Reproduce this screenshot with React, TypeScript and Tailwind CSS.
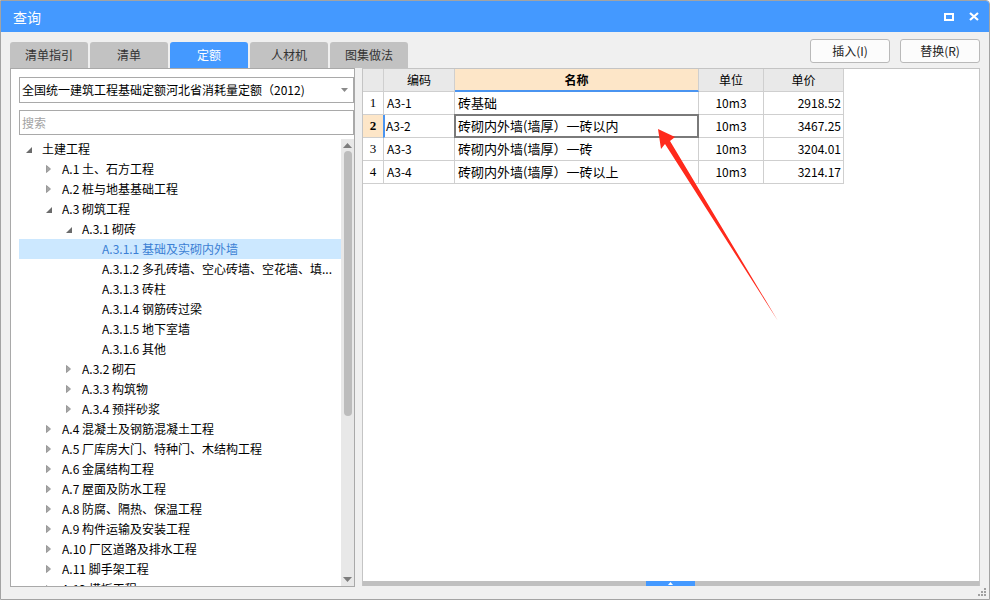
import React from 'react';

type TreeNode = { level: number; icon?: 'open' | 'closed'; text: string; selected?: boolean };

const treeData: TreeNode[] = [
  { level: 0, icon: 'open', text: '土建工程' },
  { level: 1, icon: 'closed', text: 'A.1 土、石方工程' },
  { level: 1, icon: 'closed', text: 'A.2 桩与地基基础工程' },
  { level: 1, icon: 'open', text: 'A.3 砌筑工程' },
  { level: 2, icon: 'open', text: 'A.3.1 砌砖' },
  { level: 3, text: 'A.3.1.1 基础及实砌内外墙', selected: true },
  { level: 3, text: 'A.3.1.2 多孔砖墙、空心砖墙、空花墙、填...' },
  { level: 3, text: 'A.3.1.3 砖柱' },
  { level: 3, text: 'A.3.1.4 钢筋砖过梁' },
  { level: 3, text: 'A.3.1.5 地下室墙' },
  { level: 3, text: 'A.3.1.6 其他' },
  { level: 2, icon: 'closed', text: 'A.3.2 砌石' },
  { level: 2, icon: 'closed', text: 'A.3.3 构筑物' },
  { level: 2, icon: 'closed', text: 'A.3.4 预拌砂浆' },
  { level: 1, icon: 'closed', text: 'A.4 混凝土及钢筋混凝土工程' },
  { level: 1, icon: 'closed', text: 'A.5 厂库房大门、特种门、木结构工程' },
  { level: 1, icon: 'closed', text: 'A.6 金属结构工程' },
  { level: 1, icon: 'closed', text: 'A.7 屋面及防水工程' },
  { level: 1, icon: 'closed', text: 'A.8 防腐、隔热、保温工程' },
  { level: 1, icon: 'closed', text: 'A.9 构件运输及安装工程' },
  { level: 1, icon: 'closed', text: 'A.10 厂区道路及排水工程' },
  { level: 1, icon: 'closed', text: 'A.11 脚手架工程' },
  { level: 1, icon: 'closed', text: 'A.12 模板工程' },
];

const indent = ['pl-[3px]', 'pl-[23px]', 'pl-[43px]', 'pl-[63px]'];

const rows = [
  { no: 1, code: 'A3-1', name: '砖基础', unit: '10m3', price: '2918.52' },
  { no: 2, code: 'A3-2', name: '砖砌内外墙(墙厚）一砖以内', unit: '10m3', price: '3467.25' },
  { no: 3, code: 'A3-3', name: '砖砌内外墙(墙厚）一砖', unit: '10m3', price: '3204.01' },
  { no: 4, code: 'A3-4', name: '砖砌内外墙(墙厚）一砖以上', unit: '10m3', price: '3214.17' },
];

const tabs = ['清单指引', '清单', '定额', '人材机', '图集做法'];

const TreeIcon = ({ icon }: { icon?: 'open' | 'closed' }) => {
  if (icon === 'open')
    return (
      <svg width="6" height="6" className="mt-[2px]">
        <path d="M6 0 L6 6 L0 6 Z" fill="#6b6b6b" />
      </svg>
    );
  if (icon === 'closed')
    return (
      <svg width="5" height="8">
        <path d="M0.5 0.5 L4.5 4 L0.5 7.5 Z" fill="#a6a6a6" stroke="#8c8c8c" strokeWidth="0.8" />
      </svg>
    );
  return null;
};

export default function App() {
  return (
    <div className="relative w-[990px] h-[600px] overflow-hidden border border-[#a3a3a3] rounded-tr-[4px] bg-[#f0f0f0] flex flex-col font-['Microsoft_YaHei','Noto_Sans_CJK_SC','Noto_Sans',sans-serif] text-[12px] text-black">
      {/* title bar */}
      <div className="h-[31px] bg-[#4499ff] flex items-center pl-[12px] pr-[10px] text-white">
        <span className="text-[14px] leading-none">查询</span>
        <div className="flex-1" />
        <svg width="10" height="8" className="mr-[15px]">
          <rect x="1" y="1" width="8" height="6" fill="none" stroke="#fff" strokeWidth="2" />
        </svg>
        <svg width="10" height="9">
          <path d="M1 1 L9 8 M9 1 L1 8" stroke="#fff" strokeWidth="2.2" />
        </svg>
      </div>

      {/* tabs + buttons */}
      <div className="h-[36px] flex items-end justify-between px-[9px]">
        <div className="flex gap-[2px]">
          {tabs.map((t) => (
            <div
              key={t}
              className={
                t === '定额'
                  ? 'w-[78px] h-[26px] rounded-t-[3px] bg-[#4499ff] text-white flex items-center justify-center'
                  : 'w-[78px] h-[26px] rounded-t-[3px] bg-[#c2c2c2] text-[#333] flex items-center justify-center'
              }
            >
              {t}
            </div>
          ))}
        </div>
        <div className="flex gap-[10px] mb-[5px]">
          <div className="w-[80px] h-[24px] rounded-[3px] border border-[#b9b9b9] bg-[#fcfcfc] flex items-center justify-center text-[#222]">
            插入(I)
          </div>
          <div className="w-[80px] h-[24px] rounded-[3px] border border-[#b9b9b9] bg-[#fcfcfc] flex items-center justify-center text-[#222]">
            替换(R)
          </div>
        </div>
      </div>

      {/* panels */}
      <div className="h-[519px] flex gap-[7px] px-[9px]">
        {/* left panel */}
        <div className="w-[345px] border border-[#a9a9a9] bg-white flex flex-col pt-[8px] pl-[8px]">
          <div className="h-[26px] border border-[#a9a9a9] bg-white flex items-center pl-[2px] pr-[5px]">
            <span className="flex-1 whitespace-nowrap">全国统一建筑工程基础定额河北省消耗量定额（2012)</span>
            <svg width="7" height="4">
              <path d="M0 0 L7 0 L3.5 4 Z" fill="#8a8a8a" />
            </svg>
          </div>
          <div className="h-[25px] mt-[7px] border border-[#a9a9a9] bg-white flex items-center pl-[2px] text-[#a3a3a3]">
            搜索
          </div>
          <div className="flex-1 mt-[4px] flex min-h-0">
            <div className="flex-1 overflow-hidden">
              {treeData.map((n, i) => (
                <div
                  key={i}
                  className={
                    'h-[20px] flex items-center whitespace-nowrap ' +
                    indent[n.level] +
                    (n.selected ? ' bg-[#cce8ff] text-[#3b7fd4]' : ' text-black')
                  }
                >
                  <div className="w-[20px] h-[20px] flex items-center pl-[4px]">
                    <TreeIcon icon={n.icon} />
                  </div>
                  <span className="leading-[20px]">{n.text}</span>
                </div>
              ))}
            </div>
            <div className="w-[13px] bg-[#e8e8e8] flex flex-col items-center">
              <svg width="9" height="5" className="mt-[4px]">
                <path d="M4.5 0 L9 5 L0 5 Z" fill="#7d7d7d" />
              </svg>
              <div className="w-[8px] h-[265px] mt-[3px] rounded-full bg-[#bcbcbc]" />
              <div className="flex-1" />
              <svg width="9" height="5" className="mb-[4px]">
                <path d="M0 0 L9 0 L4.5 5 Z" fill="#7d7d7d" />
              </svg>
            </div>
          </div>
        </div>

        {/* right panel */}
        <div className="flex-1 h-[518px] border-l border-t border-r border-[#c4c4c4] bg-white flex flex-col">
          <div className="flex-1">
            <div className="grid grid-cols-[21px_71px_244px_65px_80px]">
              <div className="h-[23px] bg-[#e9e9e9] border-r border-b border-[#cfcfcf]" />
              <div className="h-[23px] bg-[#e9e9e9] border-r border-b border-[#cfcfcf] flex items-center justify-center">编码</div>
              <div className="h-[23px] bg-[#fde6c8] border-r border-b-2 border-r-[#cfcfcf] border-b-[#4a94f0] flex items-center justify-center font-bold">名称</div>
              <div className="h-[23px] bg-[#e9e9e9] border-r border-b border-[#cfcfcf] flex items-center justify-center">单位</div>
              <div className="h-[23px] bg-[#e9e9e9] border-r border-b border-[#cfcfcf] flex items-center justify-center">单价</div>
              {rows.map((r) => {
                const cur = r.no === 2;
                return (
                  <React.Fragment key={r.no}>
                    <div
                      className={
                        cur
                          ? 'h-[23px] bg-[#fde6c8] border-r border-b border-[#cfcfcf] flex items-center justify-center font-bold font-["Liberation_Serif",serif] text-[13px]'
                          : 'h-[23px] border-r border-b border-[#cfcfcf] flex items-center justify-center font-["Liberation_Serif",serif] text-[13px]'
                      }
                    >
                      {r.no}
                    </div>
                    <div
                      className={
                        cur
                          ? 'h-[23px] border-l-2 border-l-[#4a94f0] border-r border-b border-r-[#cfcfcf] border-b-[#cfcfcf] flex items-center pl-[1px] -ml-[1px]'
                          : 'h-[23px] border-r border-b border-[#cfcfcf] flex items-center pl-[3px]'
                      }
                    >
                      {r.code}
                    </div>
                    <div
                      className={
                        cur
                          ? 'border-2 border-[#7a7a7a] -mt-[1px] -ml-[1px] h-[24px] flex items-center pl-[2px] whitespace-nowrap text-[13px]'
                          : 'h-[23px] border-r border-b border-[#cfcfcf] flex items-center pl-[3px] whitespace-nowrap text-[13px]'
                      }
                    >
                      {r.name}
                    </div>
                    <div className="h-[23px] border-r border-b border-[#cfcfcf] flex items-center justify-center">{r.unit}</div>
                    <div className="h-[23px] border-r border-b border-[#cfcfcf] flex items-center justify-end pr-[2px]">{r.price}</div>
                  </React.Fragment>
                );
              })}
            </div>
          </div>
          <div className="h-[5px] bg-[#c0c0c0] flex">
            <div className="w-[283px]" />
            <div className="w-[49px] bg-[#4499ff] flex items-center justify-center">
              <svg width="5" height="3">
                <path d="M2.5 0 L5 3 L0 3 Z" fill="#fff" />
              </svg>
            </div>
          </div>
        </div>
      </div>

      {/* bottom strip with grip */}
      <div className="flex-1 flex justify-end items-end pr-[2px] pb-[2px]">
        <svg width="9" height="9">
          <rect x="6" y="0" width="2" height="2" fill="#a0a0a0" />
          <rect x="3" y="3" width="2" height="2" fill="#a0a0a0" />
          <rect x="6" y="3" width="2" height="2" fill="#a0a0a0" />
          <rect x="0" y="6" width="2" height="2" fill="#a0a0a0" />
          <rect x="3" y="6" width="2" height="2" fill="#a0a0a0" />
          <rect x="6" y="6" width="2" height="2" fill="#a0a0a0" />
        </svg>
      </div>

      {/* red annotation arrow */}
      <svg className="absolute left-0 top-0 pointer-events-none" width="990" height="600">
        <polygon points="657,128 674,136 669,140 777,320 664,143 660,148" fill="#ff2a1c" />
      </svg>
    </div>
  );
}
